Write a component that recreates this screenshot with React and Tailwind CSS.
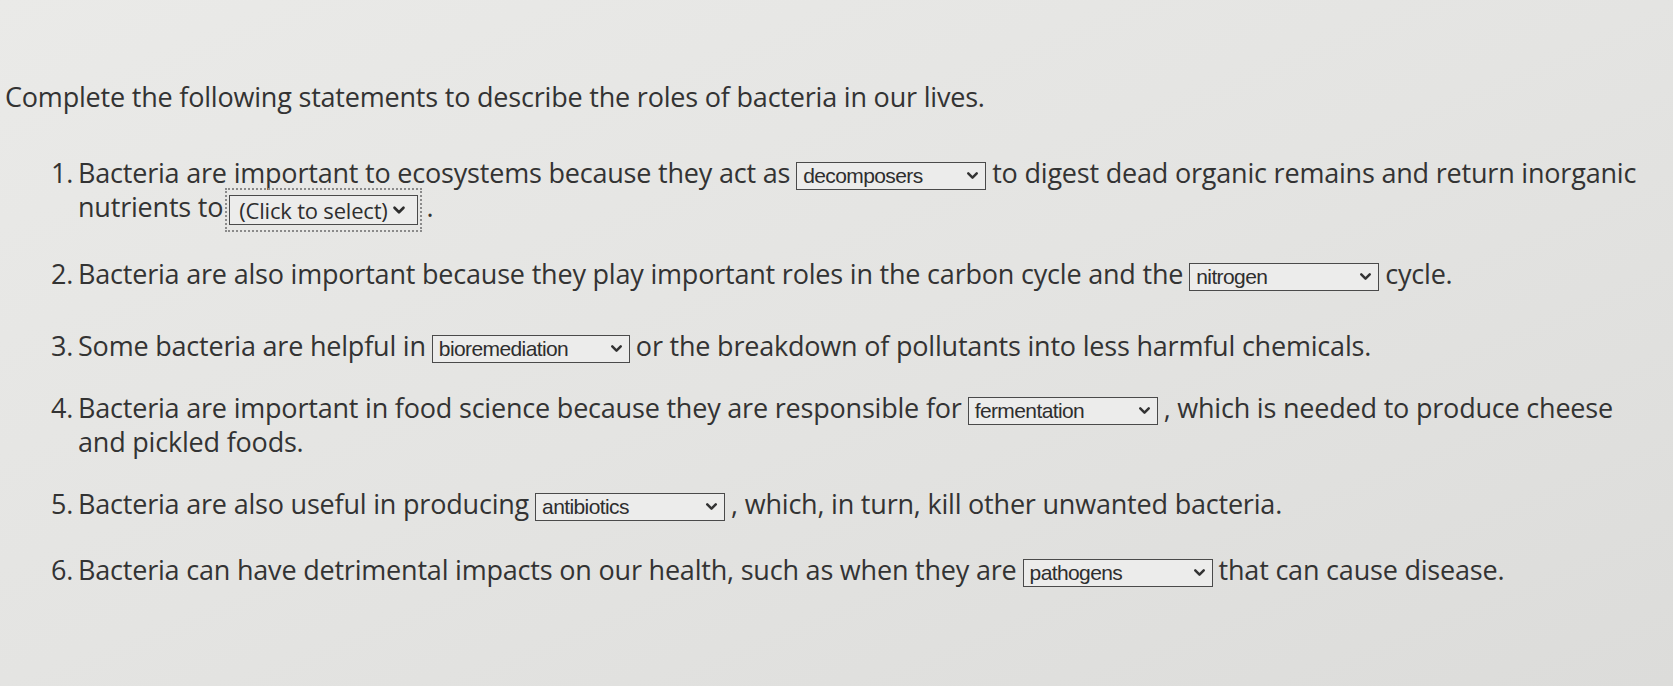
import { ChevronDown } from "lucide-react";

function Pick({ value, w = "w-[190px]" }) {
  return (
    <span
      className={`inline-flex items-center justify-between ${w} h-[28px] align-middle border border-[#4a4a4a] bg-[#ececeb] pl-[6px] pr-[4px] mx-[6px] text-[#2e2e2e] text-[21px] tracking-[-0.6px] leading-none`}
      style={{ fontFamily: '"Liberation Sans", Arial, sans-serif' }}
    >
      <span>{value}</span>
      <ChevronDown size={17} strokeWidth={3.5} className="text-[#333]" />
    </span>
  );
}

function Item({ n, children, className = "" }) {
  return (
    <div className={`flex ${className}`}>
      <span className="w-[27px] shrink-0">{n}.</span>
      <div>{children}</div>
    </div>
  );
}

export default function App() {
  return (
    <div
      className="w-[1673px] h-[686px] overflow-hidden bg-gradient-to-br from-[#eaeae8] via-[#e4e4e2] to-[#dcdcda] text-[#333333] text-[27px] leading-[34px] tracking-[-0.2px]"
      style={{ fontFamily: '"Open Sans", Lato, sans-serif' }}
    >
      <div className="pt-[80px] pl-[5px]">
        Complete the following statements to describe the roles of bacteria in our lives.
      </div>

      <div className="pl-[51px] pr-[24px] mt-[42px]">
        <Item n="1">
          Bacteria are important to ecosystems because they act as
          <Pick value="decomposers" />
          to digest dead organic remains and return inorganic nutrients to
          <span className="relative inline-flex items-center align-middle gap-[2px] border border-[#4a4a4a] bg-[#ececeb] h-[30px] px-[9px] ml-[6px] mr-[9px] text-[22px] leading-none text-[#2e2e2e]">
            <span className="absolute -inset-x-[5px] -inset-y-[8px] border-2 border-dotted border-[#8a8a8a]" />
            (Click to select)
            <ChevronDown size={18} strokeWidth={3.5} />
          </span>
          .
        </Item>

        <Item n="2" className="mt-[32px]">
          Bacteria are also important because they play important roles in the carbon cycle and the
          <Pick value="nitrogen" />
          cycle.
        </Item>

        <Item n="3" className="mt-[38px]">
          Some bacteria are helpful in
          <Pick value="bioremediation" w="w-[198px]" />
          or the breakdown of pollutants into less harmful chemicals.
        </Item>

        <Item n="4" className="mt-[28px]">
          Bacteria are important in food science because they are responsible for
          <Pick value="fermentation" />
          , which is needed to produce cheese and pickled foods.
        </Item>

        <Item n="5" className="mt-[28px]">
          Bacteria are also useful in producing
          <Pick value="antibiotics" />
          , which, in turn, kill other unwanted bacteria.
        </Item>

        <Item n="6" className="mt-[32px]">
          Bacteria can have detrimental impacts on our health, such as when they are
          <Pick value="pathogens" />
          that can cause disease.
        </Item>
      </div>
    </div>
  );
}
